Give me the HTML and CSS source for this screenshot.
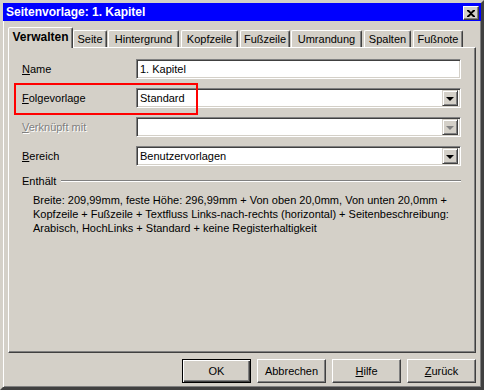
FILE: index.html
```html
<!DOCTYPE html>
<html lang="de">
<head>
    <meta charset="UTF-8">
    <title>Seitenvorlage: 1. Kapitel</title>
    <link rel="stylesheet" href="styles.css">
</head>
<body>
    <div class="dialog">
        <!-- Title bar -->
        <div class="titlebar">
            <span class="title">Seitenvorlage: 1. Kapitel</span>
            <span class="close-btn">
                <svg width="8" height="7" viewBox="0 0 8 7"><path d="M0 0h2l2 2 2-2h2v1L5 3.5 8 6v1H6L4 5 2 7H0V6l3-2.5L0 1z" fill="#000"/></svg>
            </span>
        </div>

        <div class="content">
            <!-- Tabs -->
            <div class="tabs">
                <div class="tab active">Verwalten</div>
                <div class="tab">Seite</div>
                <div class="tab">Hintergrund</div>
                <div class="tab">Kopfzeile</div>
                <div class="tab">Fußzeile</div>
                <div class="tab">Umrandung</div>
                <div class="tab">Spalten</div>
                <div class="tab">Fußnote</div>
            </div>

            <div class="panel">
                <div class="row">
                    <label class="lbl"><u>N</u>ame</label>
                    <div class="field"><span class="value">1. Kapitel</span></div>
                </div>
                <div class="row">
                    <label class="lbl"><u>F</u>olgevorlage</label>
                    <div class="field combo">
                        <span class="value">Standard</span>
                        <span class="drop"><i class="arrow"></i></span>
                    </div>
                </div>
                <div class="row disabled">
                    <label class="lbl"><u>V</u>erknüpft mit</label>
                    <div class="field combo">
                        <span class="value"></span>
                        <span class="drop"><i class="arrow"></i></span>
                    </div>
                </div>
                <div class="row">
                    <label class="lbl"><u>B</u>ereich</label>
                    <div class="field combo">
                        <span class="value">Benutzervorlagen</span>
                        <span class="drop"><i class="arrow"></i></span>
                    </div>
                </div>

                <div class="group">
                    <span class="group-title">Enthält</span>
                    <span class="group-line"></span>
                </div>
                <p class="desc">Breite: 209,99mm, feste Höhe: 296,99mm + Von oben 20,0mm, Von unten 20,0mm + Kopfzeile + Fußzeile + Textfluss Links-nach-rechts (horizontal) + Seitenbeschreibung: Arabisch, HochLinks + Standard + keine Registerhaltigkeit</p>

                <!-- highlight marker -->
                <div class="highlight"></div>
            </div>

            <div class="buttons">
                <div class="btn default">OK</div>
                <div class="btn">Abbrechen</div>
                <div class="btn"><u>H</u>ilfe</div>
                <div class="btn"><u>Z</u>urück</div>
            </div>
        </div>
    </div>
</body>
</html>
```

FILE: styles.css
```css
body {
    margin: 0;
    padding: 0;
    font-family: "Liberation Sans", Arial, sans-serif;
    font-size: 11px;
    color: #000;
    background-color: #d4d0c8;
}

.dialog {
    width: 484px;
    height: 390px;
    box-sizing: border-box;
    background-color: #d4d0c8;
    border: 3px solid;
    border-color: #d4d0c8 #404040 #404040 #d4d0c8;
    box-shadow: inset 1px 1px 0 #fff, inset -1px -1px 0 #808080;
    display: flex;
    flex-direction: column;
}

.titlebar {
    height: 18px;
    background-color: #0000ff;
    display: flex;
    align-items: center;
    justify-content: space-between;
    padding: 0 2px 0 3px;
}

.title {
    color: #fff;
    font-weight: bold;
    font-size: 12px;
}

.close-btn {
    width: 16px;
    height: 14px;
    margin-top: 2px;
    box-sizing: border-box;
    background-color: #d4d0c8;
    border: 1px solid;
    border-color: #fff #404040 #404040 #fff;
    box-shadow: inset -1px -1px 0 #808080;
    display: flex;
    align-items: center;
    justify-content: center;
}

.content {
    flex: 1;
    padding: 6px 5px 0 5px;
    display: flex;
    flex-direction: column;
}

/* Tabs */
.tabs {
    display: flex;
    align-items: flex-end;
    height: 20px;
    position: relative;
    z-index: 1;
}

.tab {
    height: 17px;
    box-sizing: border-box;
    padding-top: 2px;
    margin-left: 2px;
    text-align: center;
    border: 1px solid;
    border-bottom: none;
    border-color: #fff #404040 transparent #fff;
    box-shadow: inset -1px 0 0 #808080;
    border-radius: 2px 2px 0 0;
    white-space: nowrap;
}

.tab:nth-child(2) { width: 34px; margin-left: 0; }
.tab:nth-child(3) { width: 71px; margin-left: 1px; }
.tab:nth-child(4) { width: 57px; }
.tab:nth-child(5) { width: 50px; }
.tab:nth-child(6) { width: 71px; margin-left: 1px; }
.tab:nth-child(7) { width: 47px; }
.tab:nth-child(8) { width: 50px; }

.tab.active {
    width: 65px;
    height: 21px;
    margin: 0 0 -1px 0;
    padding-top: 2px;
    font-weight: bold;
    font-size: 12px;
    background-color: #d4d0c8;
    position: relative;
}

.panel {
    position: relative;
    height: 306px;
    box-sizing: border-box;
    border: 1px solid;
    border-color: #fff #404040 #404040 #fff;
    box-shadow: inset -1px -1px 0 #808080;
    padding: 11px 14px 0 13px;
}

.row {
    display: flex;
    align-items: center;
    height: 20px;
    margin-bottom: 9px;
}

.lbl {
    width: 114px;
}

.disabled .lbl {
    color: #808080;
    text-shadow: 1px 1px 0 #fff;
}

.field {
    flex: 1;
    height: 20px;
    box-sizing: border-box;
    background-color: #fff;
    border: 1px solid;
    border-color: #808080 #fff #fff #808080;
    box-shadow: inset 1px 1px 0 #404040, inset -1px -1px 0 #d4d0c8;
    display: flex;
    align-items: center;
    padding: 0 3px;
}

.combo {
    padding-right: 2px;
}

.value {
    flex: 1;
}

.drop {
    width: 16px;
    height: 16px;
    box-sizing: border-box;
    background-color: #d4d0c8;
    border: 1px solid;
    border-color: #d4d0c8 #404040 #404040 #d4d0c8;
    box-shadow: inset 1px 1px 0 #fff, inset -1px -1px 0 #808080;
    display: flex;
    align-items: center;
    justify-content: center;
}

.arrow {
    width: 0;
    height: 0;
    border-left: 4px solid transparent;
    border-right: 4px solid transparent;
    border-top: 4px solid #000;
    margin-top: 1px;
}

.disabled .arrow {
    border-top-color: #808080;
}

.group {
    display: flex;
    align-items: center;
    margin-top: 6px;
}

.group-title {
    margin-right: 5px;
}

.group-line {
    flex: 1;
    height: 0;
    border-top: 1px solid #808080;
    border-bottom: 1px solid #fff;
}

.desc {
    margin: 6px 0 0 11px;
    line-height: 14px;
}

.highlight {
    position: absolute;
    left: 5px;
    top: 35px;
    width: 184px;
    height: 32px;
    box-sizing: border-box;
    border: 2px solid #ff0000;
}

.buttons {
    display: flex;
    justify-content: flex-end;
    gap: 6px;
    padding-top: 6px;
}

.btn {
    width: 69px;
    height: 24px;
    box-sizing: border-box;
    border: 1px solid;
    border-color: #fff #404040 #404040 #fff;
    box-shadow: inset -1px -1px 0 #808080;
    display: flex;
    align-items: center;
    justify-content: center;
}

.btn.default {
    border-color: #000;
    box-shadow: inset 1px 1px 0 #fff, inset -1px -1px 0 #404040, inset -2px -2px 0 #808080;
}
```
